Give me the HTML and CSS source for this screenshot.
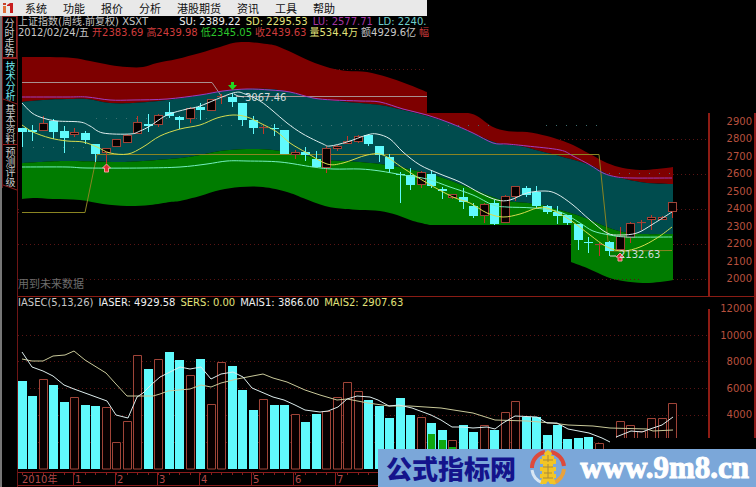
FILE: index.html
```html
<!DOCTYPE html>
<html lang="zh-CN">
<head>
    <meta charset="UTF-8">
    <meta name="viewport" content="width=device-width, initial-scale=1.0">
    <title>上证指数</title>
    <link rel="stylesheet" href="styles.css">
</head>
<body>
    <div class="app">
        <nav class="menu">
            <svg class="menu-logo" viewBox="0 0 12 12" aria-hidden="true">
                <path d="M1 4h3v7H1z" fill="#e0703a"/>
                <path d="M1 1h3v2H1z" fill="#c8402a"/>
                <path d="M5 3l3-2h3v10H8V4H5z" fill="#c81e1e"/>
            </svg>
            <button>系统</button>
            <button>功能</button>
            <button>报价</button>
            <button>分析</button>
            <button>港股期货</button>
            <button>资讯</button>
            <button>工具</button>
            <button>帮助</button>
        </nav>

        <div class="workspace">
            <aside class="tabs">
                <button class="tab tab-first">分时走势</button>
                <button class="tab tab-active">技术分析</button>
                <button class="tab">基本资料</button>
                <button class="tab tab-last">预测评级</button>
            </aside>

            <main class="panels">
                <section class="panel">
                    <div class="readout readout-price">
                        <div class="row row-wide">
                            <span class="title">上证指数(周线.前复权) XSXT</span>
                            <span class="white">SU: 2389.22</span>
                            <span class="yellow">SD: 2295.53</span>
                            <span class="purple">LU: 2577.71</span>
                            <span class="cyan">LD: 2240.</span>
                        </div>
                        <div class="row">
                            <span>2012/02/24/五</span>
                            <span class="red">开2383.69</span>
                            <span class="red">高2439.98</span>
                            <span class="green">低2345.05</span>
                            <span class="red">收2439.63</span>
                            <span class="yellow">量534.4万</span>
                            <span>额4929.6亿</span>
                            <span class="red">幅</span>
                        </div>
                    </div>
                    <svg class="chart" viewBox="18 38 692 258">
                        <g id="bands"></g>
                        <g class="grid">
                            <path d="M335 69.500H427M18 212.500H22M673 139.500H714M560 139.500H673M673 174.500H714M673 209.500H714M18 209.500H22M18 244.500H571M673 244.500H714M18 279.500H640M673 279.500H714"/>
                        </g>
                        <g class="dots">
                            <path d="M96 118.500H210M33 147.500H100M221 125.500H427M368 125.500H490M546 125.500H602M609 173.500H672"/>
                        </g>
                        <path class="step-gray" d="M22 82.500H212L222 97M236 96.500H427"/>
                        <path class="step-olive" d="M22 212.500H85L97 154.500H599L609 251L672 250.500"/>
                        <g id="candles"></g>
                        <g id="averages"></g>
                        <path class="mark-down" d="M231 82h3v3h3l-4.500 5l-4.500-5h3z"/>
                        <path class="mark-up" d="M106.500 164l4 4h-2v4h-4v-4h-2z"/>
                        <path class="mark-up" d="M620 253l4 4h-2v4h-4v-4h-2z"/>
                        <path class="pointer" d="M234 94L238 96L244 97M610 256H616"/>
                        <text class="tag" x="245" y="101">3067.46</text>
                        <text class="tag" x="619" y="258">2132.63</text>
                        <text class="hint" x="18" y="288">用到未来数据</text>
                        <path class="axis-line" d="M709 113V296"/>
                    </svg>
                    <ol class="axis axis-price">
                        <li>2900</li>
                        <li>2800</li>
                        <li>2700</li>
                        <li>2600</li>
                        <li>2500</li>
                        <li>2400</li>
                        <li>2300</li>
                        <li>2200</li>
                        <li>2100</li>
                        <li>2000</li>
                    </ol>
                </section>

                <section class="panel panel-volume">
                    <div class="readout">
                        <div class="row">
                            <span>IASEC(5,13,26)</span>
                            <span class="white">IASER: 4929.58</span>
                            <span class="yellow">SERS: 0.00</span>
                            <span class="white">MAIS1: 3866.00</span>
                            <span class="yellow">MAIS2: 2907.63</span>
                        </div>
                    </div>
                    <svg class="chart" viewBox="18 309 692 178">
                        <g class="grid">
                            <path d="M18 335.500H714M18 361.500H714M18 388.500H714M18 415.500H714M18 442.500H600"/>
                        </g>
                        <g id="volumes"></g>
                        <path class="axis-line" d="M709 309V438"/>
                        <g id="timeline"></g>
                    </svg>
                    <ol class="axis axis-volume">
                        <li>12000</li>
                        <li>10000</li>
                        <li>8000</li>
                        <li>6000</li>
                        <li>4000</li>
                    </ol>
                </section>
            </main>
        </div>

        <div class="banner">
            <span class="banner-name">公式指标网</span>
            <svg class="banner-logo" viewBox="0 0 38 38" aria-hidden="true">
                <path d="M3 19A16 16 0 0 1 16 3" fill="none" stroke="#dd4a3c" stroke-width="4"/>
                <path d="M22 3A16 16 0 0 1 35 17" fill="none" stroke="#dd4a3c" stroke-width="4"/>
                <path d="M3 21A16 16 0 0 0 14 34" fill="none" stroke="#d8e6f4" stroke-width="3"/>
                <path d="M35 20A16 16 0 0 1 24 34" fill="none" stroke="#e8a23c" stroke-width="4"/>
                <path d="M19 1l4 3-1 3h3v3h2v5h-3v3h3v4h-2v3h2v4h-2l2 6h-6l-2-3-2 3h-6l2-6h-2v-4h2v-3h-2v-4h3v-3h-3v-5h2V7h3l-1-3z" fill="#f2c526"/>
                <path d="M19 6v7M14 11h10M14 18h10M15 24h8M19 15v14M14 29h10" fill="none" stroke="#a98a3a" stroke-width="1"/>
            </svg>
            <a class="banner-link" href="#">www.9m8.cn</a>
        </div>
    </div>

    <script src="chart.js"></script>
</body>
</html>
```
FILE: styles.css
```css
* {
    box-sizing: border-box;
}
body {
    margin: 0;
    background-color: #000;
    color: #c8c8c8;
    font-family: "DejaVu Sans", "Noto Sans CJK SC", sans-serif;
    font-size: 10px;
}
button {
    margin: 0;
    padding: 0;
    border: none;
    background: none;
    color: inherit;
    font: inherit;
    cursor: pointer;
}
.app {
    position: relative;
}

/* 顶部菜单 */
.menu {
    display: flex;
    align-items: center;
    gap: 16px;
    width: 56.5%;
    height: 16px;
    padding-left: 2px;
    background-color: #e9e9e9;
    color: #111;
    overflow: hidden;
}
.menu button {
    font-family: "Noto Sans CJK SC", sans-serif;
    font-size: 11px;
    line-height: 14px;
    white-space: nowrap;
}
.menu-logo {
    width: 12px;
    height: 12px;
    margin-right: -5px;
    flex-shrink: 0;
}

/* 左侧标签 */
.workspace {
    display: grid;
    grid-template-columns: 18px 1fr;
}
.tabs {
    display: flex;
    flex-direction: column;
    border-left: 2px solid #777;
    border-right: 1px solid #6e1616;
}
.tab {
    position: relative;
    height: 43px;
    border-left: 1px solid #6e1616;
    font-family: "Noto Sans CJK SC", sans-serif;
    line-height: 14px;
    writing-mode: vertical-rl;
    color: #ccc;
}
.tab::after {
    content: "";
    position: absolute;
    left: 0;
    right: 0;
    bottom: 0;
    border-bottom: 1px solid #8e2020;
}
.tab-first {
    border: 1px solid #8e2020;
}
.tab-active {
    color: #6fe6ee;
}
.tab-active::after,
.tab-last::after {
    transform: skewY(20deg);
}

/* 图表面板 */
.panels {
    min-width: 0;
}
.panel {
    display: grid;
    grid-template-columns: 1fr 46px;
    grid-template-rows: auto auto;
}
.panel-volume {
    border-top: 1px solid #8a1c14;
}
.readout {
    grid-column: 1;
    line-height: 11px;
}
.panel-volume .readout {
    line-height: 12px;
}
.row {
    display: flex;
    gap: 3px;
    white-space: nowrap;
}
.row-wide,
.panel-volume .row {
    gap: 5px;
}
.title {
    margin-right: 26px;
}
.white {
    color: #f0f0f0;
}
.yellow {
    color: #e2e27a;
}
.purple {
    color: #a436a4;
}
.cyan {
    color: #6ccccc;
}
.red {
    color: #cf3c3c;
}
.green {
    color: #2cc62c;
}
.chart {
    grid-column: 1;
    display: block;
    width: 100%;
}
.axis {
    grid-column: 2;
    grid-row: 1 / 3;
    display: flex;
    flex-direction: column;
    justify-content: space-between;
    margin: 0;
    padding: 0 2px 0 0;
    border-right: 2px solid #8e1a1a;
    list-style: none;
    text-align: right;
    line-height: 12px;
    color: #b8503e;
}
.axis-price {
    margin-top: 97px;
    padding-top: 3px;
    padding-bottom: 11px;
}
.axis-volume {
    margin-bottom: 49px;
    padding-top: 6px;
    padding-bottom: 17px;
}

/* 图形 */
.grid path {
    fill: none;
    stroke: #5a1414;
    stroke-dasharray: 1 3;
}
.dots path {
    fill: none;
    stroke: #3f6f70;
    stroke-dasharray: 1 9;
}
.band-red {
    fill: #7e0000;
}
.band-teal {
    fill: #004c4e;
}
.band-green {
    fill: #007c00;
}
.line {
    fill: none;
    stroke-width: 1;
}
.line-white {
    stroke: #dcecec;
}
.line-yellow {
    stroke: #d6dc4e;
}
.line-pale {
    stroke: #c9c99a;
}
.line-purple {
    stroke: #a03cc0;
}
.line-cyan {
    stroke: #74f0c0;
}
.step-gray {
    fill: none;
    stroke: #a89090;
}
.step-olive {
    fill: none;
    stroke: #8a8422;
}
.down {
    fill: #60fafc;
    stroke: none;
}
.up {
    fill: #080000;
    stroke: #a04438;
}
.wick-down {
    stroke: #60fafc;
}
.wick-up {
    stroke: #c03828;
}
.sold {
    fill: #10a810;
}
.mark-down {
    fill: #22d422;
}
.mark-up {
    fill: #e03030;
    stroke: #f0a0a0;
}
.pointer {
    fill: none;
    stroke: #ddd;
}
.tag {
    fill: #d0dcdc;
    font-size: 10px;
}
.hint {
    fill: #6c6c6c;
    font-size: 11px;
}
.axis-line {
    fill: none;
    stroke: #8e1c14;
    stroke-width: 2;
}
.time-line {
    fill: none;
    stroke: #8a1c1c;
}
.time-label {
    fill: #b04a4a;
    font-size: 10px;
}

/* 底部横幅 */
.banner {
    position: absolute;
    right: 0;
    bottom: 0;
    display: flex;
    align-items: center;
    justify-content: space-between;
    width: 50%;
    height: 38px;
    padding: 0 7px 0 8px;
    background-color: #7ba7d9;
    white-space: nowrap;
    overflow: hidden;
}
.banner-name {
    font-family: "Noto Sans CJK SC", sans-serif;
    font-size: 26px;
    font-weight: 900;
    line-height: 38px;
    color: #14148c;
}
.banner-logo {
    width: 38px;
    height: 38px;
}
.banner-link {
    font-family: "Liberation Serif", serif;
    font-size: 31px;
    font-weight: bold;
    line-height: 34px;
    color: #fff;
    text-decoration: none;
    -webkit-text-stroke: 1px #fff;
}
```
FILE: chart.js
```javascript
const SVG_NS = 'http://www.w3.org/2000/svg';
const FIRST_X = 22;
const STEP = 10.49;

// [涨跌, 实体上, 实体下, 最高, 最低]
const candles = [
    ['d', 128, 132, 128, 147], ['d', 130, 132, 125, 141], ['u', 123, 131, 116, 131],
    ['d', 121, 132, 119, 139], ['d', 131, 138, 126, 153], ['u', 132, 135, 128, 137],
    ['d', 133, 140, 131, 144], ['d', 144, 154, 144, 162], ['u', 148, 153, 148, 164],
    ['u', 139, 147, 139, 147], ['u', 135, 143, 134, 143], ['u', 122, 134, 116, 134],
    ['d', 124, 126, 114, 132], ['u', 115, 125, 114, 127], ['d', 112, 116, 102, 118],
    ['d', 117, 120, 116, 129], ['u', 108, 119, 107, 123], ['d', 107, 110, 103, 120],
    ['u', 99, 111, 99, 111], ['u', 96, 97, 94, 104], ['d', 97, 102, 93, 107],
    ['d', 103, 120, 103, 126], ['d', 120, 128, 116, 134], ['u', 127, 128, 125, 134],
    ['d', 128, 129, 124, 136], ['d', 130, 154, 130, 154], ['u', 152, 155, 150, 159],
    ['d', 152, 155, 147, 161], ['d', 159, 167, 151, 167], ['u', 148, 168, 146, 173],
    ['u', 146, 149, 145, 151], ['u', 141, 144, 136, 144], ['u', 136, 142, 135, 143],
    ['d', 135, 144, 134, 146], ['d', 146, 155, 146, 162], ['d', 157, 169, 154, 173],
    ['d', 174, 175, 172, 203], ['d', 175, 185, 168, 190], ['u', 172, 185, 171, 188],
    ['d', 174, 186, 171, 188], ['d', 189, 191, 187, 199], ['u', 194, 198, 194, 199],
    ['d', 197, 202, 188, 209], ['d', 206, 216, 203, 218], ['u', 204, 216, 203, 223],
    ['d', 203, 224, 200, 225], ['u', 196, 223, 195, 223], ['u', 186, 197, 186, 201],
    ['d', 188, 195, 186, 197], ['d', 192, 206, 186, 208], ['d', 206, 212, 205, 214],
    ['d', 212, 216, 206, 224], ['d', 215, 223, 215, 225], ['d', 224, 240, 224, 250],
    ['d', 242, 243, 237, 253], ['u', 244, 245, 243, 256], ['d', 242, 251, 241, 256],
    ['u', 236, 250, 227, 250], ['u', 223, 238, 222, 243], ['u', 222, 223, 220, 230],
    ['u', 217, 220, 215, 230], ['u', 217, 220, 216, 220], ['u', 202, 212, 202, 218]
];

// [涨跌, 柱顶, 绿色部分顶]
const volumes = [
    ['d', 381], ['d', 396], ['u', 379], ['d', 385], ['d', 402], ['u', 397], ['d', 405],
    ['d', 406], ['u', 407], ['u', 442], ['u', 421], ['u', 355], ['d', 369], ['u', 359],
    ['d', 352], ['d', 360], ['u', 375], ['d', 359], ['u', 404], ['u', 362], ['d', 366],
    ['d', 390], ['d', 410], ['u', 399], ['d', 405], ['d', 405], ['u', 414], ['d', 422],
    ['d', 414], ['u', 411], ['u', 397], ['u', 382], ['u', 391], ['d', 400], ['d', 406],
    ['d', 418], ['d', 398], ['d', 415], ['u', 417], ['d', 423, 434], ['d', 430, 440],
    ['u', 440, 447], ['d', 425], ['d', 432], ['u', 425], ['d', 430], ['u', 412], ['u', 401],
    ['d', 417], ['d', 417], ['d', 435], ['d', 425], ['d', 439], ['d', 438], ['d', 437],
    ['u', 443], null, ['u', 421], ['u', 425], ['u', 431], ['u', 418], ['u', 418], ['u', 403]
];

// 通道边界
const redTop = [[22,57],[50,57],[73,58],[90,61],[110,65],[127,67],[143,67],[157,63],[177,59],[200,53],[220,47],[233,43],[247,42],[267,44],[277,46],[293,53],[310,61],[330,68],[347,71],[367,72],[387,77],[407,84],[427,92]];
const redTopRight = [[468,113],[477,116],[493,127],[507,131],[527,132],[547,136],[560,140],[573,145],[590,154],[607,163],[623,168],[640,170],[657,169],[673,167]];
const tealTop = [[22,102],[43,100],[67,99],[87,99],[110,103],[133,103],[167,100],[200,95],[223,91],[247,89],[270,89],[290,92],[313,98],[347,102],[380,105],[403,110],[427,116],[450,123],[473,133],[497,143],[520,146],[540,151],[563,157],[590,165],[607,174],[620,178],[647,183],[673,184]];
const greenTop = [[22,163],[67,161],[117,162],[143,161],[180,158],[200,155],[220,151],[247,149],[273,150],[303,155],[327,160],[360,162],[387,165],[413,170],[440,177],[467,187],[493,197],[507,201],[537,204],[560,210],[580,216],[607,227],[623,232],[643,234],[673,234]];
const greenBottom = [[22,199],[33,198],[53,199],[80,200],[103,204],[127,206],[150,205],[170,202],[180,201],[200,196],[220,190],[240,187],[263,187],[287,192],[303,198],[325,206],[345,209],[360,210],[380,211],[397,215],[413,221],[430,225]];
const greenBottomRight = [[571,262],[587,268],[607,277],[623,281],[643,283],[660,282],[673,280]];

const upperLine = [[22,97],[67,97],[87,97],[110,100],[133,100],[167,99],[200,95],[223,91],[247,89],[270,90],[290,92],[313,98],[333,100],[360,101],[380,102],[403,109],[427,115],[450,123],[473,133],[493,143],[507,144],[527,146],[560,150],[573,156],[590,165],[603,173],[617,177],[633,178],[672,178]];
const lowerLine = [[22,167],[67,167],[87,168],[143,168],[180,167],[207,164],[227,161],[247,161],[280,162],[313,167],[333,169],[360,169],[380,171],[403,175],[427,179],[450,187],[473,195],[493,205],[507,207],[533,208],[560,212],[580,223],[593,231],[610,235],[627,237],[672,237]];
const shortAverage = [[22,103],[32,113],[43,118],[57,121],[80,122],[90,126],[103,133],[130,134],[140,131],[150,126],[167,115],[187,109],[200,106],[233,93],[245,94],[260,101],[273,111],[287,123],[303,134],[323,144],[330,146],[347,142],[367,135],[377,134],[390,139],[403,152],[420,165],[440,174],[460,182],[480,193],[497,200],[510,200],[527,193],[545,191],[557,194],[573,205],[590,220],[607,233],[620,235],[637,233],[653,224],[672,212]];
const longAverage = [[22,125],[33,132],[50,138],[67,141],[83,142],[97,147],[110,153],[128,154],[143,147],[160,136],[180,129],[200,125],[217,118],[233,115],[247,117],[260,123],[277,132],[290,143],[307,153],[327,164],[343,163],[367,155],[383,155],[403,168],[427,183],[453,197],[470,203],[487,213],[503,217],[520,214],[537,208],[547,208],[560,214],[573,222],[590,235],[607,247],[623,251],[640,247],[657,238],[672,227]];

const volumeShort = [[22,352],[32,367],[43,371],[53,376],[64,385],[74,389],[107,401],[116,415],[128,418],[137,397],[143,393],[152,384],[160,377],[168,373],[180,367],[190,369],[201,367],[211,379],[221,374],[233,372],[243,377],[252,388],[273,397],[284,400],[295,405],[305,410],[320,412],[328,411],[338,407],[347,399],[357,396],[370,397],[378,400],[389,406],[399,405],[412,408],[431,415],[441,420],[452,427],[463,427],[473,428],[487,427],[495,429],[503,423],[515,416],[537,417],[547,423],[557,423],[568,429],[589,433],[602,438],[610,442]];
const volumeShortRight = [[616,437],[631,431],[642,432],[650,429],[662,425],[673,417]];
const volumeLong = [[22,359],[32,361],[43,361],[53,356],[65,355],[74,351],[85,360],[106,373],[115,383],[127,396],[153,396],[160,394],[168,391],[190,389],[201,385],[211,387],[221,383],[237,379],[263,374],[273,378],[287,382],[305,390],[320,395],[337,400],[347,399],[368,403],[389,406],[410,406],[441,408],[460,411],[473,413],[495,420],[527,421],[552,423],[568,425],[593,426],[610,428],[647,429],[653,431],[673,430]];

const months = [[73, '1'], [115, '2'], [157, '3'], [199, '4'], [251, '5'], [293, '6'], [335, '7']];

function add(parentId, tag, attrs, text) {
    const el = document.createElementNS(SVG_NS, tag);
    Object.keys(attrs).forEach(key => el.setAttribute(key, attrs[key]));
    if (text) el.textContent = text;
    document.getElementById(parentId).appendChild(el);
}

// 平滑曲线
function curve(points) {
    let d = points[0].join(' ');
    for (let i = 0; i < points.length - 1; i++) {
        const a = points[i - 1] || points[i];
        const b = points[i];
        const c = points[i + 1];
        const e = points[i + 2] || c;
        d += ` C${b[0] + (c[0] - a[0]) / 6} ${b[1] + (c[1] - a[1]) / 6}`;
        d += ` ${c[0] - (e[0] - b[0]) / 6} ${c[1] - (e[1] - b[1]) / 6} ${c[0]} ${c[1]}`;
    }
    return d;
}

function back(points) {
    return curve(points.slice().reverse());
}

function straight(points) {
    return 'M' + points.map(p => p.join(' ')).join('L');
}

add('bands', 'path', { class: 'band-red', d: `M${curve(redTop)}V113L${curve(redTopRight)}L${back(tealTop)}Z` });
add('bands', 'path', { class: 'band-teal', d: `M${curve(tealTop)}L${back(greenTop)}Z` });
add('bands', 'path', {
    class: 'band-green',
    d: `M${curve(greenTop)}L${back(greenBottomRight)}V225H430L${back(greenBottom)}Z`
});

candles.forEach((c, i) => {
    const x = Math.round(FIRST_X + i * STEP);
    const up = c[0] === 'u';
    add('candles', 'path', { class: up ? 'wick-up' : 'wick-down', d: `M${x + 0.5} ${c[3]}V${c[4]}` });
    if (up) {
        add('candles', 'rect', { class: 'up', x: x - 3.5, y: c[1] + 0.5, width: 8, height: Math.max(c[2] - c[1] - 1, 0.1) });
    } else {
        add('candles', 'rect', { class: 'down', x: x - 4, y: c[1], width: 9, height: c[2] - c[1] });
    }
});

[['purple', upperLine], ['cyan', lowerLine], ['yellow', longAverage], ['white', shortAverage]].forEach(([name, points]) => {
    add('averages', 'path', { class: `line line-${name}`, d: 'M' + curve(points) });
});

volumes.forEach((v, i) => {
    if (!v) return;
    const x = Math.round(FIRST_X + i * STEP);
    const bottom = i > 56 ? 438 : 469;
    if (v[0] === 'u') {
        add('volumes', 'path', { class: 'up', d: `M${x - 3.5} ${bottom}V${v[1] + 0.5}H${x + 4.5}V${bottom}` + (i > 56 ? '' : 'Z') });
    } else {
        add('volumes', 'rect', { class: 'down', x: x - 4, y: v[1], width: 9, height: bottom - v[1] });
    }
    if (v[2]) add('volumes', 'rect', { class: 'sold', x: x - 3, y: v[2], width: 7, height: bottom - v[2] });
});

add('volumes', 'path', { class: 'line line-pale', d: straight(volumeLong) });
add('volumes', 'path', { class: 'line line-white', d: straight(volumeShort) });
add('volumes', 'path', { class: 'line line-white', d: straight(volumeShortRight) });

// 时间轴
add('timeline', 'path', { class: 'time-line', d: 'M18 472.5H378M18 485.5H378' });
for (let i = 0; i < 34; i++) {
    add('timeline', 'path', { class: 'time-line', d: `M${Math.round(FIRST_X + i * STEP) + 0.5} 473v2` });
}
add('timeline', 'text', { class: 'time-label', x: 22, y: 483 }, '2010年');
months.forEach(([x, label]) => {
    add('timeline', 'path', { class: 'time-line', d: `M${x + 0.5} 473V485` });
    add('timeline', 'text', { class: 'time-label', x: x + 2, y: 483 }, label);
});
```
